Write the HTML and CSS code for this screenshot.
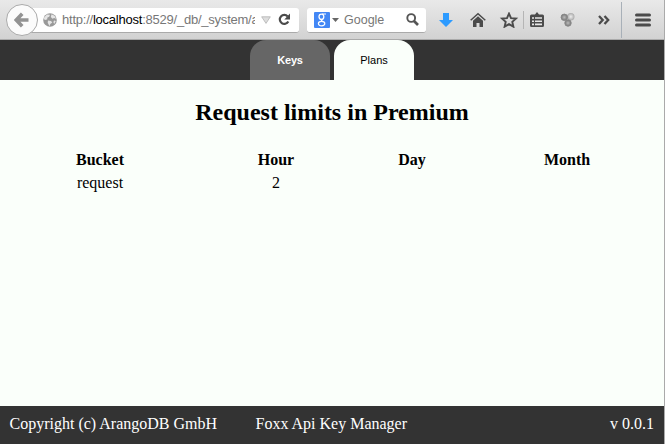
FILE: index.html
```html
<!DOCTYPE html>
<html lang="en">
<head>
<meta charset="utf-8">
<title>Foxx Api Key Manager</title>
<link rel="stylesheet" href="styles.css">
</head>
<body>
<div class="window">
  <div class="toolbar">
    <div class="back">
      <svg width="16" height="16" viewBox="0 0 16 16"><path d="M8.2 1.7 2.3 8l5.9 6.3M3 8h11.5" fill="none" stroke="#929292" stroke-width="3.6"/></svg>
    </div>
    <div class="urlbar">
      <svg class="globe" width="14" height="14" viewBox="0 0 14 14"><circle cx="7" cy="7" r="6.8" fill="#999"/><path d="M1.3 4.2 4 1.5l3 .3-.8 2-2 1 .2 1.5L2.5 7 .8 6.3zM8.500 1.200l3 1.500 1.600 3-2-.8-1.600.8-1.700-1.800zM5 7.400l3 .6 1.300 1.600-2 1.500-.8 2.100-1.800-3.400zM11 7.500l1.800.5-1.600 3-.8-1.700z" fill="#e5e5e5"/></svg>
      <span class="url">http://<b>localhost</b>:8529/_db/_system/a</span>
      <svg class="drop" width="10" height="8" viewBox="0 0 10 8"><path d="M.7.8h8.6L5 7.4z" fill="#ddd" stroke="#b3b3b3" stroke-width=".8"/></svg>
      <svg class="reload" width="13" height="13" viewBox="0 0 13 13"><path d="M10.300 8.500A4.500 4.500 0 1 1 9.700 3.500" fill="none" stroke="#4b4b4b" stroke-width="2.200"/><path d="M12 .5v6H6.300z" fill="#4b4b4b"/></svg>
    </div>
    <div class="search">
      <span class="engine"><svg width="16" height="16" viewBox="0 0 16 16"><g fill="none" stroke="#fff"><ellipse cx="7.400" cy="4.800" rx="2.400" ry="2.700" stroke-width="1.300"/><path d="M8 2h4M8.300 7.200c-1.500 1-.9 1.700.3 2.400" stroke-width="1.200"/><ellipse cx="7.600" cy="11.600" rx="3.200" ry="2.200" stroke-width="1.200"/></g></svg></span>
      <svg class="caret" width="7" height="4" viewBox="0 0 7 4"><path d="M0 0h7L3.500 4z" fill="#666"/></svg>
      <span class="hint">Google</span>
      <svg class="lens" width="13" height="13" viewBox="0 0 13 13"><circle cx="5.200" cy="5" r="3.900" fill="none" stroke="#555" stroke-width="1.900"/><path d="m8 8 4 4" stroke="#555" stroke-width="2.600"/></svg>
    </div>
    <div class="actions">
      <svg width="32" height="16" viewBox="0 0 32 16"><path d="M13 1h6v7h4L16 15 9 8h4z" fill="#2d9bff"/></svg>
      <svg width="32" height="16" viewBox="0 0 32 16"><path d="m8.700 8.300 7.300-6.500 7.300 6.500" fill="none" stroke="#4b4b4b" stroke-width="1.500"/><path d="M11 8.700l5-4.500 5 4.500V15h-3.500v-4h-3v4H11z" fill="#4b4b4b"/></svg>
      <svg width="30" height="16" viewBox="0 0 30 16"><path d="m15 1.600 2 4.500 5 .5-3.700 3.300 1.100 4.800L15 12.200l-4.400 2.500 1.100-4.800L8 6.600l5-.5z" fill="none" stroke="#4b4b4b" stroke-width="1.900"/></svg>
      <span class="divider"></span>
      <svg width="26" height="16" viewBox="0 0 26 16"><path d="M7.500 2.500H11L13 0l2 2.500h3.500Q20 2.500 20 4v9.500q0 1.500-1.500 1.500h-11Q6 15 6 13.500V4q0-1.500 1.500-1.500z" fill="#4b4b4b"/><path d="M8 6h2m1 0h7M8 9.200h2m1 0h7M8 12.400h2m1 0h7" stroke="#e6e6e6" stroke-width="1.600"/></svg>
      <svg class="addon" width="16" height="16" viewBox="0 0 16 16"><defs><radialGradient id="ball"><stop offset="0" stop-color="#bbb"/><stop offset="1" stop-color="#777"/></radialGradient><radialGradient id="light"><stop offset="0" stop-color="#eee"/><stop offset="1" stop-color="#aaa"/></radialGradient></defs><circle cx="10.800" cy="4.700" r="3.700" fill="url(#light)"/><circle cx="4.300" cy="5.300" r="3.200" fill="url(#ball)" stroke="#888"/><circle cx="8" cy="11" r="3.200" fill="url(#ball)" stroke="#888"/></svg>
      <svg class="more" width="12" height="10" viewBox="0 0 12 10"><path d="m1 1 3.700 4L1 9m5.500-8 3.700 4-3.700 4" fill="none" stroke="#4b4b4b" stroke-width="2.300"/></svg>
      <span class="divider tall"></span>
      <svg class="menu" width="16" height="14" viewBox="0 0 16 14"><path d="M1.500 2h13M1.500 7h13M1.500 12h13" stroke="#4b4b4b" stroke-width="3" stroke-linecap="round"/></svg>
    </div>
  </div>
  <nav class="tabs"><span class="tab">Keys</span><span class="tab active">Plans</span></nav>
  <main>
    <h1>Request limits in Premium</h1>
    <table>
      <colgroup><col class="bucket"><col class="hour"><col class="day"><col class="month"></colgroup>
      <tr><th>Bucket</th><th>Hour</th><th>Day</th><th>Month</th></tr>
      <tr><td>request</td><td>2</td><td></td><td></td></tr>
    </table>
  </main>
  <footer><span class="copyright">Copyright (c) ArangoDB GmbH</span><span>Foxx Api Key Manager</span><span class="version">v 0.0.1</span></footer>
</div>
</body>
</html>
```
FILE: styles.css
```css
* { box-sizing: border-box; }
body { margin: 0; background: #fafffa; font: 16px "Liberation Serif", serif; color: #000; }
svg { display: block; flex: none; }
.window { height: 444px; display: flex; flex-direction: column; border-right: 1px solid #aaa; overflow: hidden; }
.toolbar { height: 40px; flex: none; display: flex; align-items: center; padding-left: 6px; background: linear-gradient(#e9e9e9, #d2d2d2); border-bottom: 1px solid #aaa; font-family: "Liberation Sans", sans-serif; font-size: 13px; }
.back { width: 32px; height: 32px; flex: none; margin-top: 1px; border: 1px solid #aaa; border-radius: 50%; background: #fbfbfb; display: flex; align-items: center; justify-content: center; z-index: 1; }
.urlbar, .search { height: 25px; flex: none; margin-top: 1px; display: flex; align-items: center; background: #fff; border-radius: 3px; border-bottom: 1px solid #aaa; }
.urlbar { width: 277px; margin-left: -16px; padding-left: 21px; }
.url { width: 193px; margin-left: 5px; overflow: hidden; white-space: nowrap; color: #777; letter-spacing: -0.23px; }
.url b { color: #000; font-weight: normal; }
.drop { margin-left: 6px; }
.reload { margin-left: 7px; }
.search { width: 119px; margin-left: 8px; padding-left: 7px; }
.engine { width: 16px; height: 16px; background: #4387f5; border-radius: 1px; }
.caret { margin-left: 2px; }
.hint { width: 62px; margin-left: 5px; color: #777; font-size: 12.5px; }
.actions { display: flex; align-items: center; margin-left: 4px; }
.divider { width: 1px; height: 18px; margin-left: -1px; background: #b5b5b5; }
.divider.tall { height: 36px; margin-left: 11px; background: #a8b0b8; }
.addon { margin-left: 10px; }
.more { margin-left: 22px; }
.menu { margin-left: 13px; }
.tabs { height: 40px; flex: none; display: flex; justify-content: center; gap: 4px; background: #333; font: 11px "Liberation Sans", sans-serif; }
.tab { width: 80px; height: 40px; display: flex; align-items: center; justify-content: center; border-radius: 16px 16px 0 0; background: #666; color: #fff; font-weight: bold; letter-spacing: -0.2px; }
.tab.active { background: #fafffa; color: #000; font-weight: normal; letter-spacing: 0; }
main { flex: 1; }
h1 { margin: 18px 0 22px; font-size: 24px; line-height: 28px; text-align: center; }
table { width: 662px; table-layout: fixed; border-collapse: collapse; }
.bucket { width: 200px; }
.hour { width: 152px; }
.day { width: 120px; }
.month { width: 190px; }
th, td { height: 23px; padding: 0; text-align: center; }
footer { height: 38px; flex: none; display: flex; align-items: center; padding: 0 10px 2px 9.5px; background: #333; color: #fff; }
.copyright { width: 246px; }
.version { margin-left: auto; }
```
